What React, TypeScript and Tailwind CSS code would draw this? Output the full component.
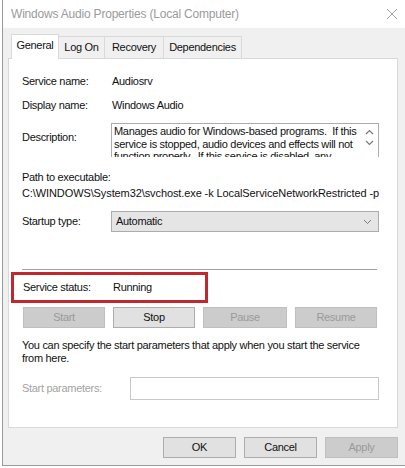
import React from 'react';

const font = { fontFamily: '"Liberation Sans", Arial, sans-serif' };

const Btn: React.FC<{ label: string; disabled?: boolean; w?: string }> = ({ label, disabled, w = 'w-[83px]' }) => (
  <div
    className={`${w} h-[21px] flex items-center justify-center border text-[11px] tracking-[-0.3px] ${
      disabled ? 'bg-[#cccccc] border-[#bfbfbf] text-[#9a9a9a]' : 'bg-[#e1e1e1] border-[#adadad] text-[#111]'
    }`}
  >
    {label}
  </div>
);

export default function App() {
  return (
    <div className="w-[405px] h-[468px] bg-white overflow-hidden text-[11px] tracking-[-0.3px] text-[#111]" style={font}>
      <div className="h-[466px] ml-[2px] border-l border-b border-[#9a9a9a] flex flex-col">
        {/* Title bar */}
        <div className="h-[28px] bg-white flex items-center justify-between pl-[8px] pr-[6px]">
          <span className="text-[12px] text-[#9b9b9b] tracking-[-0.2px]">Windows Audio Properties (Local Computer)</span>
          <svg width="12" height="12" viewBox="0 0 12 12" className="mr-[1px]">
            <path d="M1 1 L11 11 M11 1 L1 11" stroke="#a0a0a0" strokeWidth="1" />
          </svg>
        </div>

        <div className="flex-1 bg-[#f0f0f0] pl-[5px] pr-[6px] flex flex-col">
          {/* Tabs */}
          <div className="flex items-end h-[30px] pl-[3px]">
            <div className="w-[48px] h-[25px] bg-white border border-b-0 border-[#d9d9d9] flex items-center justify-center pb-[3px] relative z-10 -mb-px">
              General
            </div>
            <div className="w-[46px] h-[22px] border-t border-r border-[#d9d9d9] flex items-center justify-center">Log On</div>
            <div className="w-[59px] h-[22px] border-t border-r border-[#d9d9d9] flex items-center justify-center">Recovery</div>
            <div className="w-[78px] h-[22px] border-t border-r border-[#d9d9d9] flex items-center justify-center">Dependencies</div>
          </div>

          {/* Panel */}
          <div className="h-[370px] w-[390px] bg-white border border-[#d9d9d9] flex flex-col">
            <div className="h-[14px]" />
            <div className="flex h-[16px] items-center pl-[13px]">
              <span className="w-[90px]">Service name:</span>
              <span>Audiosrv</span>
            </div>
            <div className="flex h-[16px] items-center pl-[13px] mt-[8px]">
              <span className="w-[90px]">Display name:</span>
              <span>Windows Audio</span>
            </div>
            <div className="flex pl-[13px] mt-[10px]">
              <span className="w-[89px] pt-[6px]">Description:</span>
              <div className="w-[268px] h-[34px] border border-[#acacac] border-b-0 flex overflow-hidden">
                <div className="flex-1 pl-[2px] pt-px leading-[12.5px] overflow-hidden">
                  Manages audio for Windows-based programs.&nbsp; If this service is stopped, audio devices and effects will not function properly.&nbsp; If this service is disabled, any services that explicitly depend on it will fail to start.
                </div>
                <div className="w-[17px] flex flex-col items-center pt-[5px] gap-[5px]">
                  <svg width="9" height="6" viewBox="0 0 9 6">
                    <path d="M1 5 L4.5 1.5 L8 5" stroke="#7a7a7a" fill="none" strokeWidth="1.2" />
                  </svg>
                  <svg width="9" height="6" viewBox="0 0 9 6">
                    <path d="M1 1 L4.5 4.5 L8 1" stroke="#7a7a7a" fill="none" strokeWidth="1.2" />
                  </svg>
                </div>
              </div>
            </div>
            <div className="h-[16px] flex items-center pl-[13px] mt-[12px]">Path to executable:</div>
            <div className="h-[16px] flex items-center pl-[13px] whitespace-nowrap overflow-hidden w-[370px] tracking-[-0.1px]">
              C:\WINDOWS\System32\svchost.exe -k LocalServiceNetworkRestricted -p
            </div>
            <div className="flex items-center pl-[13px] mt-[10px]">
              <span className="w-[89px]">Startup type:</span>
              <div className="w-[268px] h-[21px] bg-[#e5e5e5] border border-[#acacac] flex items-center justify-between pl-[4px] pr-[6px]">
                <span>Automatic</span>
                <svg width="9" height="6" viewBox="0 0 9 6">
                  <path d="M1 1 L4.5 4.5 L8 1" stroke="#7a7a7a" fill="none" strokeWidth="1" />
                </svg>
              </div>
            </div>
            <div className="ml-[13px] mt-[37px] w-[355px] h-px bg-[#a0a0a0]" />
            <div className="ml-[2px] mt-[2px] w-[197px] h-[31px] border-[3px] border-[#c4262e] flex items-center pl-[9px]">
              <span className="w-[90px]">Service status:</span>
              <span>Running</span>
            </div>
            <div className="flex pl-[14px] gap-[8px] mt-[4px]">
              <Btn label="Start" disabled w="w-[82px]" />
              <Btn label="Stop" w="w-[82px]" />
              <Btn label="Pause" disabled w="w-[84px]" />
              <Btn label="Resume" disabled w="w-[82px]" />
            </div>
            <div className="pl-[13px] mt-[11px] leading-[13px] w-[372px]">
              You can specify the start parameters that apply when you start the service from here.
            </div>
            <div className="flex items-center pl-[13px] mt-[12px]">
              <span className="w-[108px] text-[#a3a3a3]">Start parameters:</span>
              <div className="w-[249px] h-[23px] border border-[#c8c8c8] bg-white" />
            </div>
          </div>

          {/* Bottom buttons */}
          <div className="flex justify-end gap-[8px] mt-[9px] pr-[1px]">
            <Btn label="OK" w="w-[73px]" />
            <Btn label="Cancel" w="w-[73px]" />
            <Btn label="Apply" disabled w="w-[73px]" />
          </div>
        </div>
      </div>
    </div>
  );
}
